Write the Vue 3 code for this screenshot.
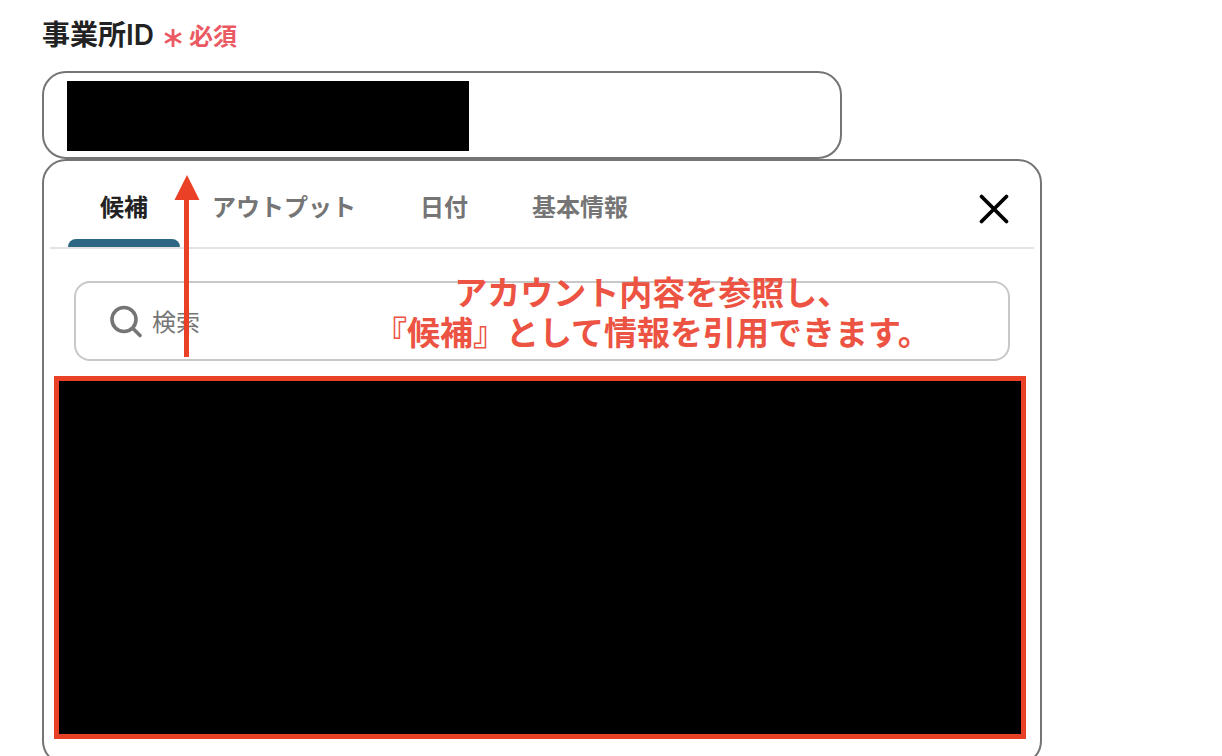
<script setup>
import { ref } from 'vue'

const tabs = ['候補', 'アウトプット', '日付', '基本情報']
const active = ref('候補')
const officeId = ref('')
const query = ref('')
</script>

<template>
  <main class="page">
    <label class="label" for="office-id">
      <span class="name">事業所ID</span>
      <svg class="asterisk" viewBox="0 0 18 20" aria-hidden="true">
        <path d="M9 1V19M1 5.4L17 14.6M17 5.4L1 14.6" />
      </svg>
      <span class="required">必須</span>
    </label>

    <div class="field">
      <input id="office-id" v-model="officeId" class="field-input" type="text" />
      <span class="field-mask"></span>
    </div>

    <section class="panel">
      <header class="head">
        <nav class="tabs" role="tablist">
          <button
            v-for="tab in tabs"
            :key="tab"
            type="button"
            role="tab"
            class="tab"
            :class="{ active: tab === active }"
            :aria-selected="tab === active"
            @click="active = tab"
          >{{ tab }}</button>
        </nav>
        <button type="button" class="close" aria-label="閉じる">
          <svg viewBox="0 0 32 32" aria-hidden="true">
            <path d="M3.5 3.5L28.5 28.5M28.5 3.5L3.5 28.5" />
          </svg>
        </button>
      </header>

      <div class="search">
        <svg class="glass" viewBox="0 0 34 34" aria-hidden="true">
          <circle cx="14" cy="14.5" r="12" />
          <path d="M23 23.5L30 30.5" />
        </svg>
        <input v-model="query" class="search-input" type="search" placeholder="検索" aria-label="検索" />
      </div>

      <div class="results"></div>

      <p class="note">アカウント内容を参照し、<br />『候補』として情報を引用できます。</p>
      <svg class="arrow" viewBox="0 0 26 182" aria-hidden="true">
        <path d="M13 0L25.5 25H0.5Z" />
        <path d="M10 24H15V182H10Z" />
      </svg>
    </section>
  </main>
</template>

<style>
body {
  margin: 0;
  background: #fff;
}
</style>

<style scoped>
.page {
  box-sizing: border-box;
  height: 100vh;
  overflow: hidden;
  padding: 15px 42px 0;
  font-family: "Liberation Sans", "Noto Sans CJK JP", sans-serif;
  color: #222;
}
.page * {
  box-sizing: border-box;
}
.label {
  display: flex;
  align-items: center;
  height: 40px;
  margin-bottom: 16px;
  font-weight: 700;
}
.name {
  font-family: Inter, "Noto Sans CJK JP", sans-serif;
  font-size: 28px;
  font-weight: 600;
  line-height: 40px;
}
.asterisk {
  width: 18px;
  height: 20px;
  margin: 6px 7px 0 10px;
  fill: none;
  stroke: #eb5a63;
  stroke-width: 2.8;
}
.required {
  font-size: 24px;
  line-height: 36px;
  margin-top: 4px;
  color: #eb5a63;
}
.field {
  position: relative;
  max-width: 800px;
  height: 88px;
}
.field-input {
  width: 100%;
  height: 100%;
  padding: 0 24px;
  border: 2px solid #757575;
  border-radius: 24px;
  background: #fff;
  font: inherit;
  font-size: 28px;
  outline: none;
}
.field-mask {
  position: absolute;
  left: 25px;
  top: 10px;
  bottom: 8px;
  width: 402px;
  background: #000;
}
.panel {
  position: relative;
  max-width: 1000px;
  padding: 0 6px 24px;
  border: 2px solid #757575;
  border-radius: 24px;
  background: #fff;
}
.head {
  display: flex;
  justify-content: space-between;
  align-items: stretch;
  height: 88px;
  padding: 0 18px;
  border-bottom: 2px solid #e3e3e3;
}
.tabs {
  display: flex;
}
.tab {
  position: relative;
  padding: 2px 32px 0;
  height: 86px;
  border: 0;
  background: none;
  font: inherit;
  font-size: 24px;
  font-weight: 700;
  color: #757575;
  white-space: nowrap;
}
.tab.active {
  color: #222;
}
.tab.active::after {
  content: "";
  position: absolute;
  left: 0;
  right: 0;
  bottom: 0;
  height: 8px;
  border-radius: 8px 8px 0 0;
  background: #2d6783;
}
.close {
  align-self: center;
  display: flex;
  width: 32px;
  height: 32px;
  margin: 10px 6px 0 0;
  padding: 0;
  border: 0;
  background: none;
}
.close svg {
  width: 32px;
  height: 32px;
  fill: none;
  stroke: #000;
  stroke-width: 3.8;
  stroke-linecap: round;
}
.search {
  display: flex;
  align-items: center;
  gap: 8px;
  height: 80px;
  margin: 32px 24px 15px;
  padding: 2px 34px 0;
  border: 2px solid #c8c8c8;
  border-radius: 16px;
}
.glass {
  flex: none;
  width: 34px;
  height: 34px;
  fill: none;
  stroke: #757575;
  stroke-width: 3.6;
  stroke-linecap: round;
}
.search-input {
  flex: 1;
  min-width: 0;
  height: 40px;
  padding: 2px 0 0;
  border: 0;
  background: none;
  font: inherit;
  font-size: 24px;
  color: #222;
  outline: none;
}
.search-input::placeholder {
  color: #757575;
  opacity: 1;
}
.results {
  height: 363px;
  margin: 0 8px 0 4px;
  border: 5px solid #ea4025;
  background: #000;
}
.note {
  position: absolute;
  top: 113px;
  left: 330px;
  margin: 0;
  font-size: 33px;
  font-weight: 700;
  line-height: 40px;
  text-align: center;
  white-space: nowrap;
  color: #ec5343;
}
.arrow {
  position: absolute;
  top: 14px;
  left: 130px;
  width: 26px;
  height: 182px;
  fill: #ea4025;
}
</style>
